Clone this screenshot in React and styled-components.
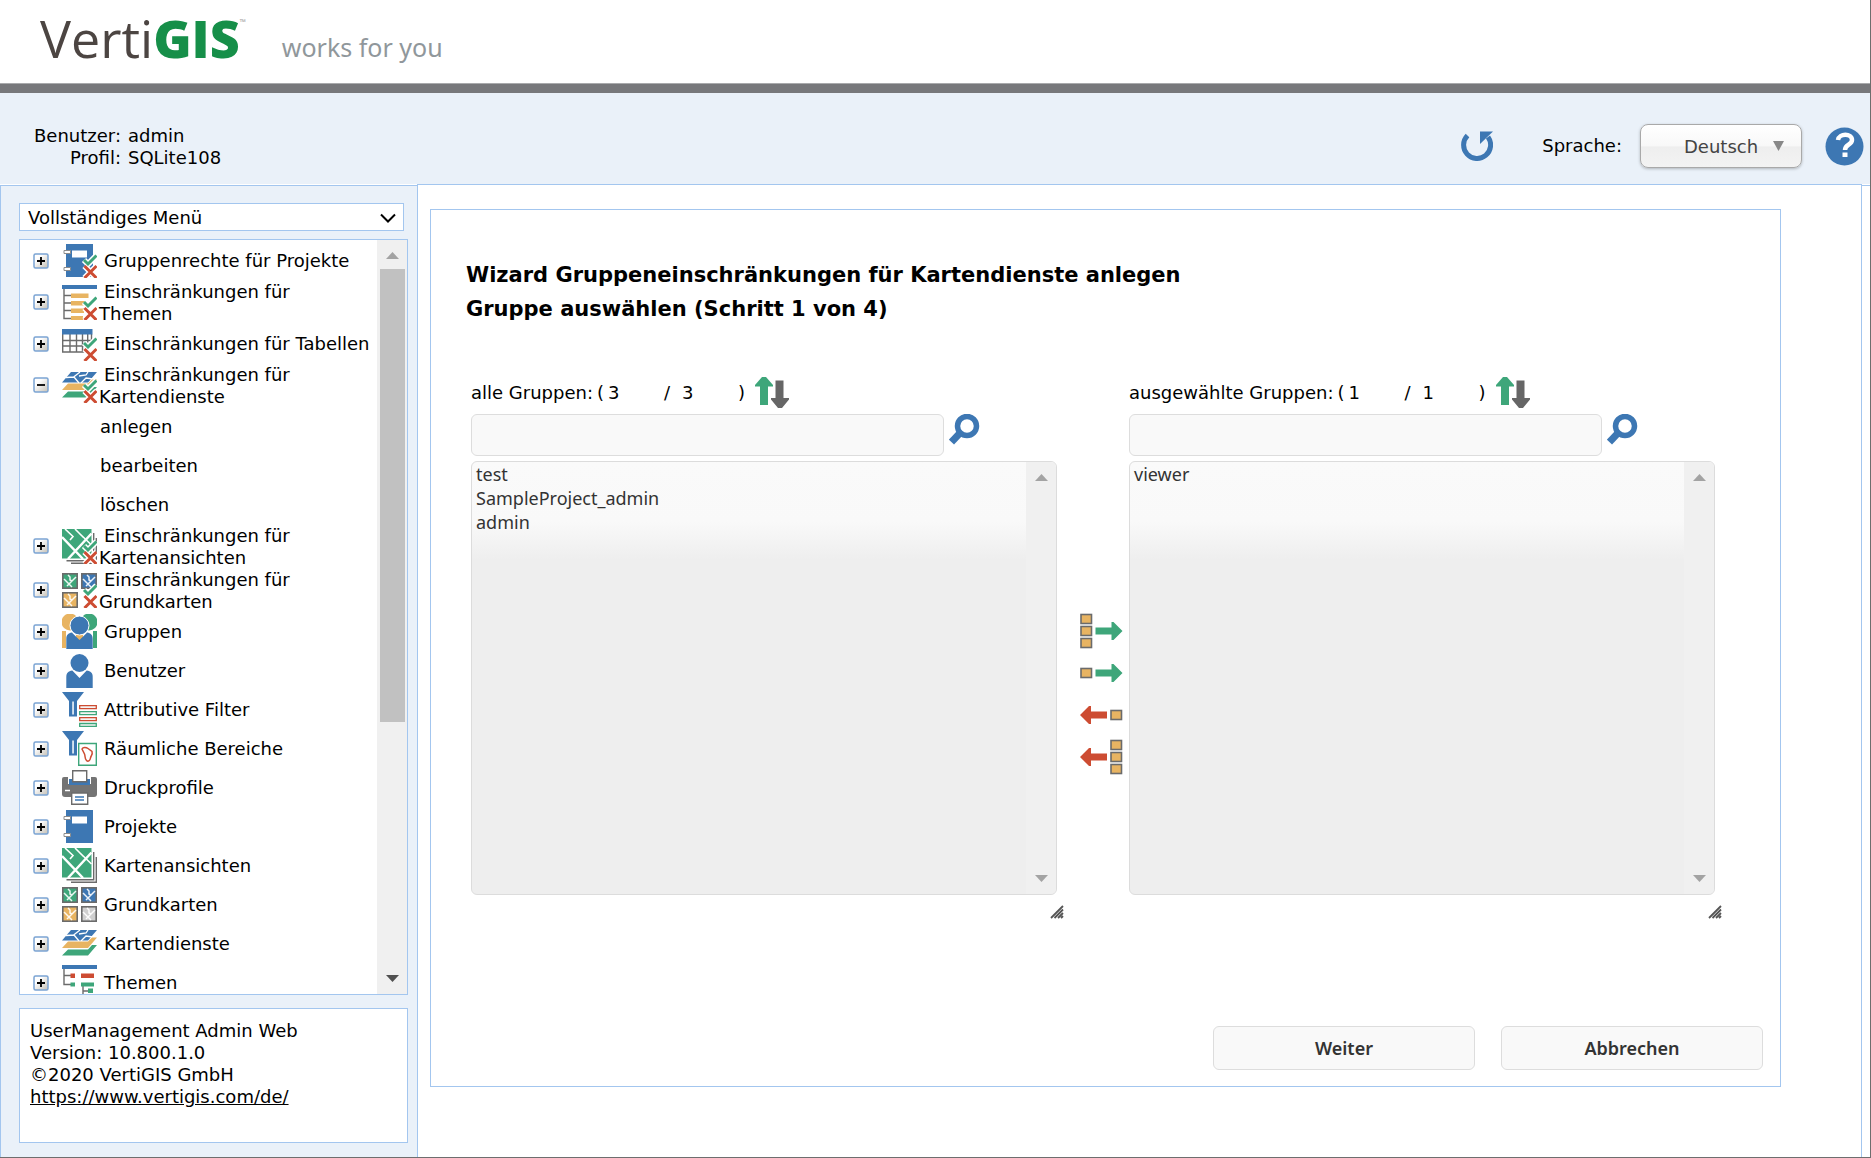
import React from 'react'
import styled, { createGlobalStyle } from 'styled-components'

const BLUE = '#3d77b3';
const GREEN = '#3ea67a';
const ORANGE = '#e8b462';
const RED = '#cd4c32';
const GREY = '#6b6b6b';
const LINE = '#a3c6ef';

const GlobalStyle = createGlobalStyle`
    * {
        box-sizing: border-box;
    }

    body {
        margin: 0;
        background: #fff;
        color: #000;
        font-family: Verdana, 'DejaVu Sans', sans-serif;
        font-size: 18px;
        line-height: 22px;
    }

    button, input, select {
        font: inherit;
        color: inherit;
        margin: 0;
    }
`;

const Page = styled.div`
    display: flex;
    flex-direction: column;
    height: 100vh;
    min-height: 700px;
    border-right: 1px solid #6e6e6e;
    border-bottom: 1px solid #6e6e6e;
    background: #fff;
`;

const Header = styled.header`
    display: flex;
    align-items: flex-start;
    height: 93px;
    padding-left: 40px;
    border-bottom: 9px solid #77787b;
    box-shadow: inset 0 -1px 0 #a9aaac;
    font-family: 'Open Sans', sans-serif;
    line-height: 76px;
`;

const Logo = styled.div`
    display: flex;
    color: #4c4542;
    font-size: 52px;
    font-weight: 400;

    strong {
        color: #168f49;
        font-weight: 800;
    }

    sup {
        color: #999;
        font-size: 8px;
        line-height: 44px;
    }
`;

const Slogan = styled.span`
    margin-left: 36px;
    color: #90979b;
    font-family: 'Noto Sans', sans-serif;
    font-size: 25px;
    line-height: 94px;
`;

const TopBar = styled.div`
    display: flex;
    justify-content: space-between;
    align-items: center;
    height: 91px;
    padding: 0 6px 0 34px;
    background: #eaf1f9;
`;

const UserInfo = styled.dl`
    display: grid;
    grid-template-columns: auto auto;
    column-gap: 7px;
    margin: 16px 0 0;

    dt {
        text-align: right;
    }

    dd {
        margin: 0;
    }
`;

const Tools = styled.div`
    display: flex;
    align-items: center;
    margin-top: 15px;
`;

const IconButton = styled.button`
    display: block;
    flex: none;
    padding: 0;
    border: 0;
    background: none;
    line-height: 0;
    cursor: pointer;

    svg {
        display: block;
    }
`;

const LanguageLabel = styled.label`
    margin: 0 18px 0 49px;
`;

const LanguageBox = styled.div`
    position: relative;
    width: 162px;
    margin-right: 23px;

    svg {
        position: absolute;
        top: 17px;
        right: 18px;
        pointer-events: none;
    }
`;

const LanguageSelect = styled.select`
    appearance: none;
    display: block;
    width: 100%;
    height: 44px;
    padding: 2px 0 0 43px;
    border: 1px solid #a9a9a9;
    border-radius: 8px;
    background: linear-gradient(#fff, #f8f8f8 50%, #eee 52%, #f3f3f3);
    box-shadow: 0 1px 3px rgba(0, 0, 0, 0.25);
    color: #444;
`;

const Main = styled.div`
    display: flex;
    flex: 1;
    min-height: 0;
    background: linear-gradient(${LINE}, ${LINE}) 0 1px / 100% 1px no-repeat;
`;

const Sidebar = styled.aside`
    display: flex;
    flex-direction: column;
    flex: none;
    width: 417px;
    margin-top: 1px;
    padding: 17px 9px 14px 18px;
    border: 1px solid ${LINE};
    border-width: 1px 0 0 1px;
    background: #eaf1f9;
`;

const MenuSelectBox = styled.div`
    position: relative;
    margin: 0 4px 8px 0;

    svg {
        position: absolute;
        top: 10px;
        right: 8px;
        pointer-events: none;
    }
`;

const MenuSelect = styled.select`
    appearance: none;
    display: block;
    width: 100%;
    height: 28px;
    padding: 2px 8px 0;
    border: 1px solid ${LINE};
    border-radius: 0;
    background: #fff;
`;

const TreeBox = styled.nav`
    display: flex;
    flex: 1;
    min-height: 0;
    border: 1px solid ${LINE};
    background: #fff;
`;

const Tree = styled.ul`
    flex: 1;
    margin: 0;
    padding: 1px 0 0;
    overflow-y: auto;
    scrollbar-width: none;
    list-style: none;

    ul {
        margin: 0;
        padding: 0;
        list-style: none;
    }
`;

const TreeRow = styled.div`
    display: flex;
    align-items: center;
    height: ${props => props.$double ? 44 : 39}px;
    padding-left: 13px;
`;

const Expander = styled(IconButton)`
    margin-right: 13px;
`;

const TreeLink = styled.a`
    margin-left: 2px;
    padding-top: 1px;
    color: inherit;
    text-decoration: none;
    text-indent: 5px;
    white-space: nowrap;
`;

const SubLink = styled.a`
    display: block;
    height: 39px;
    padding-left: 80px;
    color: inherit;
    line-height: 39px;
    text-decoration: none;
`;

const Scrollbar = styled.div`
    display: flex;
    flex-direction: column;
    justify-content: space-between;
    align-items: center;
    flex: none;
    width: 30px;
    padding: 12px 0;
    background: #f0f0f0;
`;

const Thumb = styled.div`
    flex: 0 0 62%;
    width: 25px;
    margin: 10px 0 auto;
    background: #c1c1c1;
`;

const About = styled.div`
    flex: none;
    min-height: 135px;
    margin-top: 13px;
    padding: 11px 10px;
    border: 1px solid ${LINE};
    background: #fff;

    a {
        color: inherit;
    }
`;

const Content = styled.main`
    flex: 1;
    min-width: 0;
    margin-right: 8px;
    padding: 24px 80px 0 12px;
    border: 1px solid ${LINE};
    border-bottom: 0;
    background: #fff;
    overflow: hidden;
`;

const Wizard = styled.form`
    padding: 48px 17px 16px 40px;
    border: 1px solid ${LINE};
`;

const Title = styled.h1`
    margin: 0 0 51px -5px;
    font-size: 21px;
    font-weight: bold;
    line-height: 34px;
`;

const Lists = styled.div`
    display: grid;
    grid-template-columns: 1fr 65px 1fr;
    margin-right: 41px;
`;

const Column = styled.section`
    min-width: 0;
`;

const CountLine = styled.div`
    display: flex;
    align-items: center;
    gap: 4px;
    height: 31px;
    margin-bottom: 6px;
    line-height: 24px;
`;

const Count = styled.span`
    width: 52px;
`;

const Slash = styled.span`
    padding-right: 8px;
`;

const SortButton = styled(IconButton)`
    margin-left: 6px;
`;

const SearchLine = styled.div`
    display: flex;
    align-items: flex-start;
    gap: 5px;
    margin-bottom: 5px;
    padding-right: 84px;
`;

const SearchInput = styled.input`
    flex: 1;
    min-width: 0;
    height: 42px;
    padding: 0 8px;
    border: 1px solid #ddd;
    border-radius: 6px;
    background: #f9f9f9;
`;

const ListBox = styled.div`
    display: flex;
    height: 434px;
    margin-right: 7px;
    border: 1px solid #dcdcdc;
    border-radius: 6px;
    background: linear-gradient(#fafafa, #f9f9f9 60px, #eee 98px);
    overflow: hidden;
`;

const GroupSelect = styled.select`
    flex: 1;
    min-width: 0;
    padding: 0;
    border: 0;
    outline: 0;
    background: transparent;
    color: #333;
    font-family: 'Trebuchet MS', 'Noto Sans', sans-serif;
    font-size: 18px;
    overflow: hidden;

    option {
        min-height: 24px;
        padding: 0 4px;
        line-height: 24px;
    }
`;

const Grip = styled.div`
    display: flex;
    justify-content: flex-end;
    margin-top: 10px;
`;

const MoveButtons = styled.div`
    display: flex;
    flex-direction: column;
    gap: 6px;
    padding: 236px 0 0 16px;
`;

const Actions = styled.div`
    display: flex;
    justify-content: flex-end;
    gap: 26px;
    margin-top: 107px;
`;

const ActionButton = styled.button`
    width: 262px;
    height: 44px;
    border: 1px solid #ddd;
    border-radius: 6px;
    background: #f9f9f9;
    color: #333;
    font-family: 'Trebuchet MS', 'Noto Sans', sans-serif;
    font-weight: 600;
    cursor: pointer;
`;

/* ---- icons ---- */

const Icon = ({ children }) => (
    <svg width="35" height="35" viewBox="0 0 35 35" aria-hidden="true">{children}</svg>
);

// tick and cross laid over the restricted variants
const Marks = () => (
    <g fill="none">
        <path d="M22 17l4 4 8.500-8.500M22.500 23l12 12M34.500 23l-12 12" stroke="#fff" strokeWidth="6" />
        <path d="M22 17l4 4 8.500-8.500" stroke={GREEN} strokeWidth="3" />
        <path d="M22.500 23l12 12M34.500 23l-12 12" stroke={RED} strokeWidth="3" />
    </g>
);

const Book = () => (
    <g>
        <path d="M4 1h27v33H4z" fill={BLUE} />
        <path d="M10 7.500h15v7H10z" fill="#fff" />
        <path d="M2 7.500h6.500v3H2zM2 24.500h6.500v3H2z" fill="#fff" stroke="#8c8c8c" />
    </g>
);

const ThemeList = () => (
    <g>
        <path d="M2 4v29.500h7M2 10.500h7M2 18h7M2 25.500h7" fill="none" stroke={GREY} strokeWidth="1.400" />
        <path d="M0 0h35v4H0z" fill={BLUE} />
        <path d="M9 8.500h17.500v4.500H9zM9 16h14v4.500H9zM9 23.500h13v4.500H9zM9 31h12v4H9z" fill={ORANGE} />
    </g>
);

const Table = () => (
    <g>
        <path d="M.7 8v18h25V8M8 8v18M14.500 8v18M20.500 8v18M0 14.500h29.500M0 20h26M29.500 8v8" fill="none" stroke={GREY} strokeWidth="1.400" />
        <path d="M0 3h30.500v5.500H0z" fill={BLUE} />
    </g>
);

const Layers = () => (
    <g>
        <path d="M0 14.500L9 4h26l-9 10.500z" fill={BLUE} />
        <path d="M4 9.500l8-.5L17 15M11 9.500L18 4M17 8l7-1 2-3M19 15l5-5 7 1" fill="none" stroke="#fff" strokeWidth="1.300" />
        <path d="M0 22l6-6.500h20l4-4h5L26 22z" fill={ORANGE} />
        <path d="M0 29.500L6 23.500h20l4-4.500h5l-9 10.500z" fill={GREEN} />
    </g>
);

const MapSheets = () => (
    <g>
        <path d="M31.700 4v27.700H4.500M34.300 9v25.300H9" fill="none" stroke={GREY} strokeWidth="1.400" />
        <path d="M0 0h29.500v29.500H0z" fill={GREEN} />
        <path d="M0 8l21 22M29.500 4.500L6 30" fill="none" stroke="#fff" strokeWidth="2.500" />
        <path d="M3 0l8 7.500L8 11M13 0l8.500 8.500M17 4l12.500 12" fill="none" stroke="#fff" strokeWidth="1.600" />
    </g>
);

const Tile = ({ x, y, color }) => (
    <g>
        <rect x={x + 0.800} y={y + 0.800} width="14.400" height="14.400" fill={color} stroke={GREY} strokeWidth="1.600" />
        <path d={`M${x + 2} ${y + 6}l8 8M${x + 14} ${y + 4}L${x + 5} ${y + 13}M${x + 6} ${y + 2}l2 2v3l2 1`} fill="none" stroke="#fff" strokeOpacity=".9" strokeWidth="1.500" />
    </g>
);

const Tiles = ({ last }) => (
    <g>
        <Tile x={0} y={0} color={GREEN} />
        <Tile x={19} y={0} color={BLUE} />
        <Tile x={0} y={19} color={ORANGE} />
        {last && <Tile x={19} y={19} color="#cfcfcf" />}
    </g>
);

const Person = () => (
    <g fill={BLUE}>
        <circle cx="17.500" cy="10" r="9" />
        <path d="M4.300 35V24c0-4 2-6 6-6.500l7.200 7.500 7.200-7.500c4 .5 6 2.500 6 6.500v11z" />
    </g>
);

const Group = () => (
    <g>
        <path d="M0 17h35v17H0z" fill="#fff" />
        <circle cx="8" cy="8" r="8.500" fill={ORANGE} />
        <circle cx="27" cy="8" r="8.500" fill={GREEN} />
        <path d="M0 17h4v17H0zM14 20h7v6h-7z" fill={ORANGE} />
        <path d="M31 17h4v17h-4z" fill={GREEN} />
        <circle cx="17.500" cy="11.500" r="9.500" fill={BLUE} stroke="#fff" />
        <path d="M4.300 35V25c0-4 2-6 5.500-6.500l7.700 7.500 7.700-7.500c3.500.5 5.500 2.500 5.500 6.500v10z" fill={BLUE} />
    </g>
);

const Funnel = () => (
    <g>
        <path d="M0 0h22l-7 9v15.500H7V9z" fill={BLUE} />
        <path d="M10.300 9.500h1.500v13h-1.500z" fill="#fff" />
    </g>
);

const AttributeFilter = () => (
    <g>
        <Funnel />
        <g fill="#f4f4f4" strokeWidth="1.300">
            <path d="M17.700 13.700h16.600v3H17.700zM17.700 25.700h16.600v3H17.700z" stroke={RED} />
            <path d="M17.700 19.700h16.600v3H17.700zM17.700 31.500h16.600v2.800H17.700z" stroke={GREEN} />
        </g>
    </g>
);

const AreaFilter = () => (
    <g>
        <Funnel />
        <path d="M16.700 12.500h17.600v21.800H16.700z" fill="#fff" stroke={GREEN} strokeWidth="1.400" />
        <path d="M20 18c1-2 4-2 6-.5l4 3c1 3-1 4-1.500 6.500-.5 3-2.500 4-4 2.500-2-2-1-4-2-6.500z" fill="none" stroke={RED} strokeWidth="1.500" />
    </g>
);

const Printer = () => (
    <g>
        <path d="M2 7h31q2 0 2 2v15q0 3-3 3H3q-3 0-3-3V9q0-2 2-2z" fill="#747474" />
        <path d="M6 7h23v7H6z" fill="#fff" />
        <path d="M7 9h21v6H7z" fill={BLUE} />
        <path d="M10.700.7h14v11h-14z" fill="#fff" stroke={GREY} strokeWidth="1.400" />
        <path d="M3 20.500h5" stroke="#fff" strokeWidth="1.500" />
        <path d="M9.700 23h16v11.200h-16z" fill="#fff" stroke={GREY} strokeWidth="1.400" />
        <path d="M13 27h9M13 30h9" stroke={BLUE} strokeWidth="1.300" />
    </g>
);

const ThemeTree = () => (
    <g>
        <path d="M2 4v15.500h8M2 10.500h8M21 20v13M21 26h7" fill="none" stroke={GREY} strokeWidth="1.400" />
        <path d="M0 0h35v4H0z" fill={BLUE} />
        <path d="M8.500 8.500H13V13H8.500zM19 8.500h13V13H19z" fill={RED} />
        <path d="M8.500 17.500H13v4H8.500zM19 17.500h13v4H19zM26 23.500h5V28h-5z" fill={GREEN} />
    </g>
);

const ExpandIcon = ({ open }) => (
    <svg width="16" height="16" viewBox="0 0 16 16" aria-hidden="true">
        <defs>
            <linearGradient id="box" x1="0" y1="0" x2="1" y2="1">
                <stop offset=".3" stopColor="#fff" />
                <stop offset="1" stopColor="#c4bfb4" />
            </linearGradient>
        </defs>
        <rect x="1" y="1" width="14" height="14" rx="1.500" fill="url(#box)" stroke="#7ba4d3" strokeWidth="1.500" />
        <path d={open ? 'M4 8h8' : 'M4 8h8M8 4v8'} stroke="#000" strokeWidth="1.800" />
    </svg>
);

const RefreshIcon = () => (
    <svg width="32" height="31" viewBox="0 0 32 31" aria-hidden="true">
        <path d="M6.500 4.500A13.500 13.500 0 1 0 27 6" fill="none" stroke={BLUE} strokeWidth="5" />
        <path d="M19 .5h13L19 13z" fill={BLUE} />
    </svg>
);

const HelpIcon = () => (
    <svg width="39" height="39" viewBox="0 0 39 39" aria-hidden="true">
        <circle cx="19.500" cy="19.500" r="19" fill={BLUE} />
        <path d="M13 13c1-7 14-7 14 0 0 5-7 4.500-7 10" fill="none" stroke="#fff" strokeWidth="4.500" />
        <path d="M17.500 25.500h5V30h-5z" fill="#fff" />
    </svg>
);

const SortIcon = () => (
    <svg width="34" height="31" viewBox="0 0 34 31" aria-hidden="true">
        <path d="M7 0h4l7 8v1.500h-5V28H5V9.500H0V8z" fill={GREEN} />
        <path d="M20.500 3.500h8v17.500H34v1.500L27 31h-4l-7-8.500V21h4.500z" fill="#666" />
    </svg>
);

const SearchIcon = () => (
    <svg width="31" height="31" viewBox="0 0 31 31" aria-hidden="true">
        <circle cx="18" cy="12" r="9.500" fill="none" stroke={BLUE} strokeWidth="5.500" />
        <path d="M11.500 18.500L2.500 28" stroke={BLUE} strokeWidth="7" />
    </svg>
);

const MoveIcon = ({ back, all }) => (
    <svg width="43" height="36" viewBox="0 0 43 36" aria-hidden="true">
        {(all ? [6, 18, 30] : [18]).map(y => (
            <rect key={y} x={back ? 31 : 1} y={y - 4.500} width="10.500" height="9" fill={ORANGE} stroke={GREY} strokeWidth="1.600" />
        ))}
        {back
            ? <path d="M0 18l9-9h2v5.500h16v7H11V27H9z" fill={RED} />
            : <path d="M42.500 18l-9-9h-2v5.500h-16v7h16V27h2z" fill={GREEN} />}
    </svg>
);

const Triangle = ({ up, color = '#a3a3a3', width = 13, height = 7 }) => (
    <svg width={width} height={height} viewBox="0 0 10 10" preserveAspectRatio="none" aria-hidden="true">
        <path d={up ? 'M0 10L5 0l5 10z' : 'M0 0h10L5 10z'} fill={color} />
    </svg>
);

const GripIcon = () => (
    <svg width="14" height="14" viewBox="0 0 14 14" aria-hidden="true">
        <path d="M1 13L13 1M4.500 13L13 4.500M8 13l5-5M11 13l2-2" stroke="#555" strokeWidth="1.800" />
    </svg>
);

const MENU = [
    { lines: ['Gruppenrechte für Projekte'], icon: <><Book /><Marks /></> },
    { lines: ['Einschränkungen für', 'Themen'], icon: <><ThemeList /><Marks /></> },
    { lines: ['Einschränkungen für Tabellen'], icon: <><Table /><Marks /></> },
    {
        lines: ['Einschränkungen für', 'Kartendienste'],
        icon: <><Layers /><Marks /></>,
        items: ['anlegen', 'bearbeiten', 'löschen'],
    },
    { lines: ['Einschränkungen für', 'Kartenansichten'], icon: <><MapSheets /><Marks /></> },
    { lines: ['Einschränkungen für', 'Grundkarten'], icon: <><Tiles /><Marks /></> },
    { lines: ['Gruppen'], icon: <Group /> },
    { lines: ['Benutzer'], icon: <Person /> },
    { lines: ['Attributive Filter'], icon: <AttributeFilter /> },
    { lines: ['Räumliche Bereiche'], icon: <AreaFilter /> },
    { lines: ['Druckprofile'], icon: <Printer /> },
    { lines: ['Projekte'], icon: <Book /> },
    { lines: ['Kartenansichten'], icon: <MapSheets /> },
    { lines: ['Grundkarten'], icon: <Tiles last /> },
    { lines: ['Kartendienste'], icon: <Layers /> },
    { lines: ['Themen'], icon: <ThemeTree /> },
];

const MenuEntry = ({ lines, icon, items }) => (
    <li>
        <TreeRow $double={lines.length > 1}>
            <Expander type="button" aria-label={lines.join(' ')} aria-expanded={!!items}>
                <ExpandIcon open={!!items} />
            </Expander>
            <Icon>{icon}</Icon>
            <TreeLink href="#">
                {lines[0]}
                {lines[1] && <><br />{lines[1]}</>}
            </TreeLink>
        </TreeRow>
        {items &&
            <ul>
                {items.map(item => (
                    <li key={item}><SubLink href="#">{item}</SubLink></li>
                ))}
            </ul>
        }
    </li>
);

const GroupColumn = ({ label, groups }) => (
    <Column>
        <CountLine>
            <span>{label}</span>
            <span>(</span>
            <Count>{groups.length}</Count>
            <Slash>/</Slash>
            <Count>{groups.length}</Count>
            <span>)</span>
            <SortButton type="button" aria-label="Sortieren"><SortIcon /></SortButton>
        </CountLine>
        <SearchLine>
            <SearchInput type="text" aria-label={label} />
            <IconButton type="button" aria-label="Suchen"><SearchIcon /></IconButton>
        </SearchLine>
        <ListBox>
            <GroupSelect multiple aria-label={label}>
                {groups.map(group => <option key={group}>{group}</option>)}
            </GroupSelect>
            <Scrollbar>
                <Triangle up />
                <Triangle />
            </Scrollbar>
        </ListBox>
        <Grip><GripIcon /></Grip>
    </Column>
);

class App extends React.Component {
    constructor(props) {
        super(props);

        this.state = {
            all: ['test', 'SampleProject_admin', 'admin'],
            selected: ['viewer'],
        }
    }

    handleSubmit = (event) => {
        event.preventDefault();
    }

    render() {
        const { all, selected } = this.state;
        return (
            <Page>
                <GlobalStyle />
                <Header>
                    <Logo>Verti<strong>GIS</strong><sup>™</sup></Logo>
                    <Slogan>works for you</Slogan>
                </Header>
                <TopBar>
                    <UserInfo>
                        <dt>Benutzer:</dt>
                        <dd>admin</dd>
                        <dt>Profil:</dt>
                        <dd>SQLite108</dd>
                    </UserInfo>
                    <Tools>
                        <IconButton type="button" aria-label="Aktualisieren"><RefreshIcon /></IconButton>
                        <LanguageLabel htmlFor="language">Sprache:</LanguageLabel>
                        <LanguageBox>
                            <LanguageSelect id="language">
                                <option>Deutsch</option>
                            </LanguageSelect>
                            <Triangle color="#888" width={11} height={10} />
                        </LanguageBox>
                        <IconButton type="button" aria-label="Hilfe"><HelpIcon /></IconButton>
                    </Tools>
                </TopBar>
                <Main>
                    <Sidebar>
                        <MenuSelectBox>
                            <MenuSelect aria-label="Menü">
                                <option>Vollständiges Menü</option>
                            </MenuSelect>
                            <svg width="16" height="10" viewBox="0 0 16 10" aria-hidden="true">
                                <path d="M1 1.500l7 7 7-7" fill="none" stroke="#000" strokeWidth="2" />
                            </svg>
                        </MenuSelectBox>
                        <TreeBox>
                            <Tree>
                                {MENU.map(entry => <MenuEntry key={entry.lines.join(' ')} {...entry} />)}
                            </Tree>
                            <Scrollbar>
                                <Triangle up />
                                <Thumb />
                                <Triangle color="#505050" />
                            </Scrollbar>
                        </TreeBox>
                        <About>
                            UserManagement Admin Web<br />
                            Version: 10.800.1.0<br />
                            ©2020 VertiGIS GmbH<br />
                            <a href="https://www.vertigis.com/de/">https://www.vertigis.com/de/</a>
                        </About>
                    </Sidebar>
                    <Content>
                        <Wizard onSubmit={this.handleSubmit}>
                            <Title>
                                Wizard Gruppeneinschränkungen für Kartendienste anlegen<br />
                                Gruppe auswählen (Schritt 1 von 4)
                            </Title>
                            <Lists>
                                <GroupColumn label="alle Gruppen:" groups={all} />
                                <MoveButtons>
                                    <IconButton type="button" aria-label="Alle hinzufügen"><MoveIcon all /></IconButton>
                                    <IconButton type="button" aria-label="Hinzufügen"><MoveIcon /></IconButton>
                                    <IconButton type="button" aria-label="Entfernen"><MoveIcon back /></IconButton>
                                    <IconButton type="button" aria-label="Alle entfernen"><MoveIcon back all /></IconButton>
                                </MoveButtons>
                                <GroupColumn label="ausgewählte Gruppen:" groups={selected} />
                            </Lists>
                            <Actions>
                                <ActionButton type="submit">Weiter</ActionButton>
                                <ActionButton type="button">Abbrechen</ActionButton>
                            </Actions>
                        </Wizard>
                    </Content>
                </Main>
            </Page>
        )
    }
}

export default App;
